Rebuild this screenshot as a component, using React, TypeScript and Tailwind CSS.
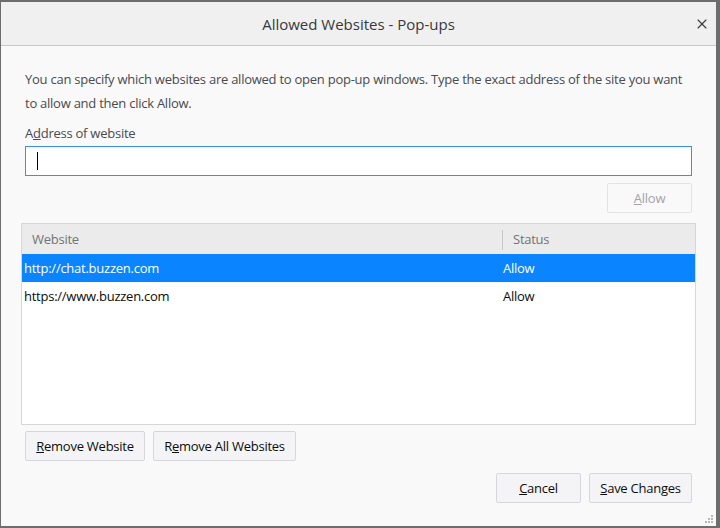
import { X } from "lucide-react";

const font = { fontFamily: '"Open Sans", "Noto Sans", sans-serif' };

function Btn({
  children,
  className = "",
  disabled = false,
}: {
  children: React.ReactNode;
  className?: string;
  disabled?: boolean;
}) {
  return (
    <button
      className={
        "h-[30px] whitespace-nowrap rounded-[2px] border px-0 pt-[2px] text-[13px] tracking-[-0.25px] " +
        (disabled
          ? "border-[#e3e3e6] bg-[#f9f9fa] text-[#a4a4a8]"
          : "border-[#d7d7db] bg-[#f4f4f6] text-[#0c0c0d]") +
        " " +
        className
      }
    >
      {children}
    </button>
  );
}

const sites = [
  { url: "http://chat.buzzen.com", status: "Allow", selected: true },
  { url: "https://www.buzzen.com", status: "Allow", selected: false },
];

export default function App() {
  return (
    <div className="h-[528px] w-[720px] bg-[#6d6d6d] pl-[1px] pt-[2px]" style={font}>
      <div className="relative flex h-[524px] w-[715px] flex-col bg-[#f9f9fa]">
        {/* title bar */}
        <div className="flex h-[44px] items-center justify-center border-b border-[#c8c8c8] bg-[#f0f0f0] pt-[2px]">
          <span className="text-[15px] text-[#38383d]">Allowed Websites - Pop-ups</span>
          <X size={16} strokeWidth={1.7} className="absolute right-[6px] top-[14px] text-[#38383d]" />
        </div>

        <div className="flex flex-1 flex-col px-[24px] pt-[21px] tracking-[-0.25px]">
          <p className="text-[13px] leading-[24px] text-[#4a4a4f]">
            You can specify which websites are allowed to open pop-up windows. Type the exact address of the site you want
            to allow and then click Allow.
          </p>
          <label className="mt-[9px] text-[13px] leading-[18px] text-[#4a4a4f]">
            A<span className="underline">d</span>dress of website
          </label>
          <div className="mt-[4px] flex h-[30px] items-center border border-[#3b8fe6] bg-white pl-[11px]">
            <span className="h-[18px] w-[1px] bg-black" />
          </div>
          <div className="mt-[7px] flex justify-end">
            <Btn disabled className="w-[85px]">
              <span className="underline">A</span>llow
            </Btn>
          </div>

          {/* site list */}
          <div className="-mx-[4px] mt-[10px] flex h-[202px] flex-col border border-[#d7d7db] bg-white">
            <div className="flex h-[30px] items-center bg-[#ebebeb] pt-[2px] text-[13px] text-[#737373]">
              <div className="flex h-full w-[480px] items-center pl-[10px]">Website</div>
              <div className="h-[20px] w-[1px] bg-[#c8c8c8]" />
              <div className="pl-[10px]">Status</div>
            </div>
            {sites.map((s) => (
              <div
                key={s.url}
                className={
                  "flex h-[28px] items-center pt-[2px] text-[13px] " +
                  (s.selected ? "bg-[#0a84ff] text-white" : "text-[#0c0c0d]")
                }
              >
                <div className="w-[481px] pl-[2px]">{s.url}</div>
                <div>{s.status}</div>
              </div>
            ))}
          </div>

          <div className="mt-[6px] flex gap-[8px]">
            <Btn className="w-[120px]">
              <span className="underline">R</span>emove Website
            </Btn>
            <Btn className="w-[143px]">
              R<span className="underline">e</span>move All Websites
            </Btn>
          </div>

          <div className="mt-[12px] flex justify-end gap-[8px]">
            <Btn className="w-[85px]">
              <span className="underline">C</span>ancel
            </Btn>
            <Btn className="w-[103px]">
              <span className="underline">S</span>ave Changes
            </Btn>
          </div>
        </div>

        {/* resize grip */}
        <svg width="10" height="10" className="absolute bottom-[2px] right-[2px]" fill="#b8b8b8">
          <rect x="7" y="1" width="2" height="2" />
          <rect x="4" y="4" width="2" height="2" />
          <rect x="7" y="4" width="2" height="2" />
          <rect x="1" y="7" width="2" height="2" />
          <rect x="4" y="7" width="2" height="2" />
          <rect x="7" y="7" width="2" height="2" />
        </svg>
      </div>
    </div>
  );
}
